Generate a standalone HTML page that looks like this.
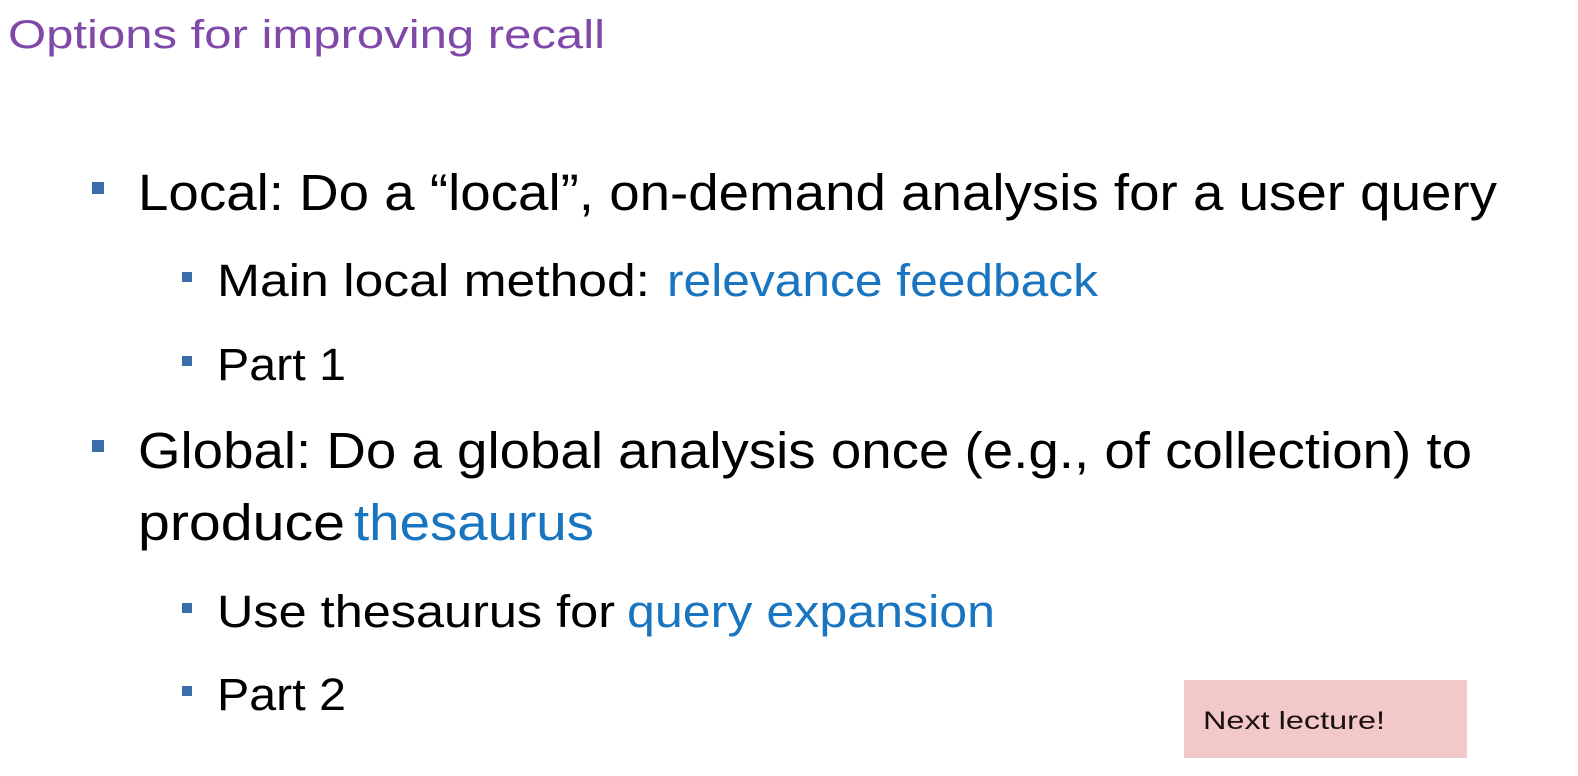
<!DOCTYPE html>
<html><head><meta charset="utf-8"><style>
html,body{margin:0;padding:0;background:#fff;width:1578px;height:776px;overflow:hidden}
svg{display:block}
text{font-family:"Liberation Sans",sans-serif}
</style></head><body>
<svg width="1578" height="776" viewBox="0 0 1578 776">
<text x="8" y="48" font-size="40" fill="#8048a8" textLength="597" lengthAdjust="spacingAndGlyphs">Options for improving recall</text>
<rect x="92" y="182" width="12" height="12" fill="#3b6ea8"/>
<text x="138" y="210" font-size="51" fill="#000" textLength="1359" lengthAdjust="spacingAndGlyphs">Local: Do a “local”, on-demand analysis for a user query</text>
<rect x="182" y="272" width="10" height="10" fill="#3b6ea8"/>
<text x="217" y="296" font-size="45" fill="#000" textLength="433" lengthAdjust="spacingAndGlyphs">Main local method:</text>
<text x="667" y="296" font-size="45" fill="#1a75c0" textLength="431" lengthAdjust="spacingAndGlyphs">relevance feedback</text>
<rect x="182" y="356" width="10" height="10" fill="#3b6ea8"/>
<text x="217" y="380" font-size="45" fill="#000" textLength="129" lengthAdjust="spacingAndGlyphs">Part 1</text>
<rect x="92" y="440" width="12" height="12" fill="#3b6ea8"/>
<text x="138" y="468" font-size="51" fill="#000" textLength="1334" lengthAdjust="spacingAndGlyphs">Global: Do a global analysis once (e.g., of collection) to</text>
<text x="138" y="540" font-size="51" fill="#000" textLength="207" lengthAdjust="spacingAndGlyphs">produce</text>
<text x="354" y="540" font-size="51" fill="#1a75c0" textLength="240" lengthAdjust="spacingAndGlyphs">thesaurus</text>
<rect x="182" y="603" width="10" height="10" fill="#3b6ea8"/>
<text x="217" y="627" font-size="45" fill="#000" textLength="398" lengthAdjust="spacingAndGlyphs">Use thesaurus for</text>
<text x="627" y="627" font-size="45" fill="#1a75c0" textLength="368" lengthAdjust="spacingAndGlyphs">query expansion</text>
<rect x="182" y="686" width="10" height="10" fill="#3b6ea8"/>
<text x="217" y="710" font-size="45" fill="#000" textLength="129" lengthAdjust="spacingAndGlyphs">Part 2</text>
<rect x="1184" y="680" width="283" height="78" fill="#f2c8c8"/>
<text x="1203" y="729" font-size="25" fill="#1a1010" textLength="182" lengthAdjust="spacingAndGlyphs">Next lecture!</text>
</svg>
</body></html>
